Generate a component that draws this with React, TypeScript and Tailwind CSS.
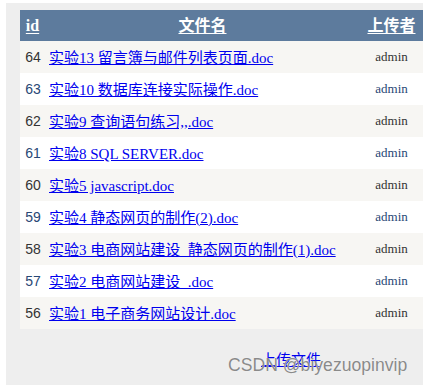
const ROWS = [
  { id: 64, name: '实验13 留言簿与邮件列表页面.doc' },
  { id: 63, name: '实验10 数据库连接实际操作.doc' },
  { id: 62, name: '实验9 查询语句练习,,.doc' },
  { id: 61, name: '实验8 SQL SERVER.doc' },
  { id: 60, name: '实验5 javascript.doc' },
  { id: 59, name: '实验4 静态网页的制作(2).doc' },
  { id: 58, name: '实验3 电商网站建设  静态网页的制作(1).doc' },
  { id: 57, name: '实验2 电商网站建设  .doc' },
  { id: 56, name: '实验1 电子商务网站设计.doc' },
]

const SERIF = 'font-["Liberation_Serif","Noto_Sans_CJK_SC",serif]'

export default function App() {
  return (
    <div className="relative w-[423px] h-[387px] bg-white pt-[3px] pl-[6px] overflow-hidden">
      <div className="h-[382px] bg-[#eeeeee] pl-[14px] pt-[7px]">
        <table className="w-[403px] table-fixed border-collapse">
          <colgroup>
            <col className="w-[25px]" />
            <col className="w-[315px]" />
            <col className="w-[63px]" />
          </colgroup>
          <thead>
            <tr className={`h-[31px] bg-[#5D7B9D] text-white font-bold text-[16px] leading-none ${SERIF}`}>
              <th className="text-center p-0"><span className="underline underline-offset-2">id</span></th>
              <th className="text-center p-0"><span className="underline underline-offset-2">文件名</span></th>
              <th className="text-center p-0"><span className="underline underline-offset-2">上传者</span></th>
            </tr>
          </thead>
          <tbody>
            {ROWS.map((r, i) => {
              const alt = i % 2 === 1
              return (
                <tr
                  key={r.id}
                  className={`h-[32px] ${alt ? 'bg-white text-[#284775]' : 'bg-[#F7F6F3] text-[#333333]'}`}
                >
                  <td className='p-0 pl-[1px] text-center text-[14px] font-["Liberation_Sans",sans-serif]'>{r.id}</td>
                  <td className="p-0 pl-[4px] whitespace-pre">
                    <a href="#" className={`text-[#0000EE] underline text-[15px] leading-none ${SERIF}`}>
                      {r.name}
                    </a>
                  </td>
                  <td className='p-0 text-center text-[13px] font-["Liberation_Serif",serif]'>admin</td>
                </tr>
              )
            })}
          </tbody>
        </table>
        <div className="pl-[241px] mt-[18px]">
          <a href="#" className={`text-[#0000EE] underline text-[15px] leading-[17px] ${SERIF}`}>上传文件</a>
        </div>
      </div>
      <div className='absolute left-[228px] top-[355px] text-[17.6px] leading-[21px] text-[#8a8a8a] font-["Liberation_Sans",sans-serif] [text-shadow:0_0_1px_#fff]'>
        CSDN @biyezuopinvip
      </div>
    </div>
  )
}
